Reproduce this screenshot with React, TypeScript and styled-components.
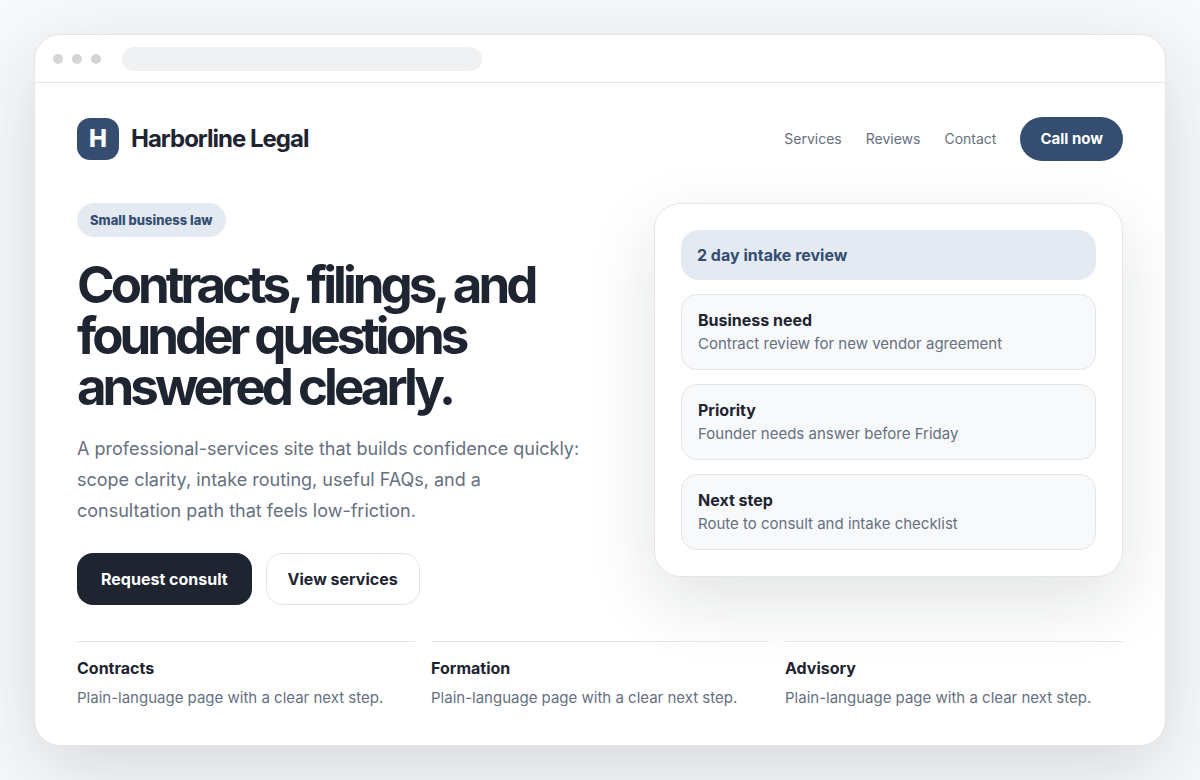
import React from "react";
import styled, { createGlobalStyle } from "styled-components";

const GlobalStyle = createGlobalStyle`
  *, *::before, *::after { box-sizing: border-box; }
  body {
    margin: 0;
    background: #f8f9fb;
    color: #1e2430;
    font-family: Inter, "Liberation Sans", sans-serif;
    font-size: 16px;
    line-height: 24px;
    -webkit-font-smoothing: antialiased;
  }
  h1, h2, h3, p { margin: 0; }
  a { color: inherit; text-decoration: none; }
  button { font: inherit; cursor: pointer; }
`;

const Page = styled.div`
  min-height: 100vh;
  padding: 34px;
  background: #f8f9fb;
`;

const Window = styled.div`
  overflow: hidden;
  background: #fff;
  border: 1px solid #e3e5e8;
  border-radius: 26px;
  box-shadow: 0 24px 80px rgba(20, 26, 28, 0.15);
`;

const BrowserBar = styled.div`
  display: flex;
  align-items: center;
  gap: 9px;
  height: 48px;
  padding: 0 18px;
  border-bottom: 1px solid #e3e5e8;
`;

const Dot = styled.span`
  width: 10px;
  height: 10px;
  border-radius: 50%;
  background: #d3d5d7;
`;

const Address = styled.div`
  width: 360px;
  height: 24px;
  margin-left: 12px;
  border-radius: 12px;
  background: #f0f1f3;
`;

const Site = styled.div`
  padding: 34px 42px 35px;
`;

const Header = styled.header`
  display: flex;
  align-items: center;
  justify-content: space-between;
`;

const Brand = styled.a`
  display: flex;
  align-items: center;
  gap: 12px;
  font-size: 24px;
  font-weight: 700;
  line-height: 28px;
  letter-spacing: -1px;
`;

const Mark = styled.span`
  display: grid;
  place-items: center;
  width: 42px;
  height: 42px;
  border-radius: 13px;
  background: #344d70;
  color: #fff;
  font-weight: 800;
  letter-spacing: 0;
`;

const Nav = styled.nav`
  display: flex;
  align-items: center;
  gap: 24px;
  color: #667080;
  font-size: 14px;
`;

const CallButton = styled.button`
  height: 44px;
  padding: 0 20px;
  border: 0;
  border-radius: 22px;
  background: #344d70;
  color: #fff;
  font-size: 15px;
  font-weight: 700;
`;

const Hero = styled.section`
  display: grid;
  grid-template-columns: minmax(0, 1fr) minmax(0, 469px);
  gap: 50px;
  align-items: start;
  margin-top: 42px;
`;

const Pill = styled.span`
  display: inline-block;
  padding: 5px 13px;
  border-radius: 17px;
  background: #e3eaf2;
  color: #344d70;
  font-size: 13px;
  font-weight: 800;
`;

const Title = styled.h1`
  margin-top: 22px;
  font-size: 51px;
  font-weight: 700;
  line-height: 51px;
  letter-spacing: -4px;
`;

const Lead = styled.p`
  max-width: 508px;
  margin-top: 21px;
  color: #667080;
  font-size: 18px;
  line-height: 31px;
`;

const Actions = styled.div`
  display: flex;
  gap: 14px;
  margin-top: 27px;
`;

const ActionButton = styled.button<{ $primary?: boolean }>`
  height: 52px;
  padding: 0 ${(p) => (p.$primary ? 24 : 21)}px;
  border: ${(p) => (p.$primary ? "0" : "1px solid #e3e5e8")};
  border-radius: 16px;
  background: ${(p) => (p.$primary ? "#1e2430" : "#fff")};
  color: ${(p) => (p.$primary ? "#fff" : "#1e2430")};
  font-weight: 700;
`;

const Intake = styled.aside`
  display: grid;
  gap: 14px;
  padding: 26px;
  border: 1px solid #e3e5e8;
  border-radius: 26px;
  background: #fff;
  box-shadow: 0 24px 70px rgba(20, 28, 36, 0.12);
`;

const IntakeTitle = styled.h2`
  padding: 13px 16px;
  border-radius: 18px;
  background: #e3eaf2;
  color: #344d70;
  font-size: 16px;
  font-weight: 700;
`;

const IntakeCard = styled.div`
  padding: 13px 16px;
  border: 1px solid #e3e5e8;
  border-radius: 16px;
  background: #f8f9fa;
`;

const CardTitle = styled.h3`
  font-size: 16px;
  font-weight: 700;
`;

const Muted = styled.p`
  color: #667080;
  font-size: 15px;
`;

const Practice = styled.section`
  display: grid;
  grid-template-columns: repeat(3, minmax(0, 1fr));
  gap: 16px;
  margin-top: 36px;
`;

const PracticeItem = styled.article`
  display: grid;
  gap: 6px;
  padding-top: 14px;
  border-top: 1px solid #e3e5e8;
`;

const intake = [
  { title: "Business need", text: "Contract review for new vendor agreement" },
  { title: "Priority", text: "Founder needs answer before Friday" },
  { title: "Next step", text: "Route to consult and intake checklist" },
];

const practices = ["Contracts", "Formation", "Advisory"];

export default function App() {
  return (
    <>
      <GlobalStyle />
      <Page>
        <Window>
          <BrowserBar>
            <Dot />
            <Dot />
            <Dot />
            <Address />
          </BrowserBar>
          <Site>
            <Header>
              <Brand href="#">
                <Mark>H</Mark>
                <span>Harborline Legal</span>
              </Brand>
              <Nav>
                <a href="#services">Services</a>
                <a href="#reviews">Reviews</a>
                <a href="#contact">Contact</a>
                <CallButton type="button">Call now</CallButton>
              </Nav>
            </Header>
            <main>
              <Hero>
                <div>
                  <Pill>Small business law</Pill>
                  <Title>
                    Contracts, filings, and
                    <br />
                    founder questions
                    <br />
                    answered clearly.
                  </Title>
                  <Lead>
                    A professional-services site that builds confidence quickly: scope clarity, intake routing, useful
                    FAQs, and a consultation path that feels low-friction.
                  </Lead>
                  <Actions>
                    <ActionButton type="button" $primary>
                      Request consult
                    </ActionButton>
                    <ActionButton type="button">View services</ActionButton>
                  </Actions>
                </div>
                <Intake>
                  <IntakeTitle>2 day intake review</IntakeTitle>
                  {intake.map((item) => (
                    <IntakeCard key={item.title}>
                      <CardTitle>{item.title}</CardTitle>
                      <Muted>{item.text}</Muted>
                    </IntakeCard>
                  ))}
                </Intake>
              </Hero>
              <Practice id="services">
                {practices.map((name) => (
                  <PracticeItem key={name}>
                    <CardTitle>{name}</CardTitle>
                    <Muted>Plain-language page with a clear next step.</Muted>
                  </PracticeItem>
                ))}
              </Practice>
            </main>
          </Site>
        </Window>
      </Page>
    </>
  );
}
